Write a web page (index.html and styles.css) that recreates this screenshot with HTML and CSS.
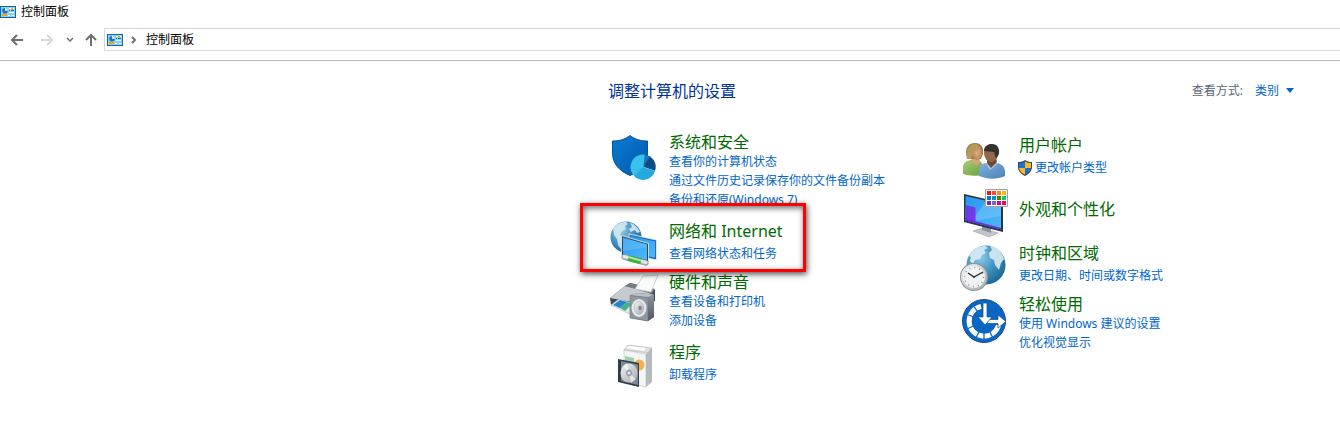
FILE: index.html
```
<!DOCTYPE html>
<html lang="zh-CN">
  <head>
    <meta charset="UTF-8">
    <meta name="viewport" content="width=device-width,initial-scale=1.0">
    <title>控制面板</title>
    <link rel="stylesheet" href="styles.css">
  </head>
  <body>
    <svg class="defs" aria-hidden="true">
      <defs>
        <linearGradient id="gShield" x1="0" y1="0" x2="1" y2="1"><stop offset="0" stop-color="#0a7cd2"/><stop offset="1" stop-color="#0058ad"/></linearGradient>
        <linearGradient id="gScreen" x1="0" y1="0" x2="1" y2="1"><stop offset="0" stop-color="#2796ef"/><stop offset="1" stop-color="#4fb8fb"/></linearGradient>
        <radialGradient id="gGlobe" cx=".35" cy=".3" r=".75"><stop offset="0" stop-color="#8fcbe6"/><stop offset=".5" stop-color="#4496c3"/><stop offset="1" stop-color="#1c6595"/></radialGradient>
        <linearGradient id="gMetal" x1="0" y1="0" x2="1" y2="1"><stop offset="0" stop-color="#f4f5f6"/><stop offset="1" stop-color="#a3a8ad"/></linearGradient>
        <linearGradient id="gSide" x1="0" y1="0" x2="0" y2="1"><stop offset="0" stop-color="#8b959e"/><stop offset="1" stop-color="#4d5862"/></linearGradient>
        <linearGradient id="gGreen" x1="0" y1="0" x2="1" y2="1"><stop offset="0" stop-color="#a9cf75"/><stop offset="1" stop-color="#689d3e"/></linearGradient>
        <linearGradient id="gBlue" x1="0" y1="0" x2="1" y2="1"><stop offset="0" stop-color="#82b0da"/><stop offset="1" stop-color="#4b81b8"/></linearGradient>
        <radialGradient id="gSkin"><stop offset="0" stop-color="#dcae87"/><stop offset="1" stop-color="#bd835c"/></radialGradient>
        <linearGradient id="gPurple" x1="0" y1="0" x2="1" y2="1"><stop offset="0" stop-color="#5548dc"/><stop offset="1" stop-color="#8b2cf5"/></linearGradient>
        <symbol id="panel" viewBox="0 0 16 12">
          <path fill="#17679f" d="M0 0h16v12H0z"/><path fill="#8bd1f8" d="M1 1h14v10H1z"/>
          <circle cx="5" cy="4.8" r="2.8" fill="#1677bd"/><path fill="#fff" d="M5 4.8V2a2.8 2.8 0 0 1 2.8 2.800z"/>
          <path stroke="#fff" d="M9 2.500h5M9 6.500h5"/><path stroke="#1677bd" d="M9 4.500h1M11 4.500h3"/>
          <path fill="#f5a51d" d="M11 2h2v2h-2zM2 8h5v2H2z"/><path fill="#fff" d="M8 9h2v1H8zM12 9h2v1h-2z"/>
        </symbol>
      </defs>
    </svg>

    <header class="window-top">
      <div class="titlebar">
        <svg class="panel-icon" aria-hidden="true"><use href="#panel"/></svg>
        <span>控制面板</span>
      </div>
      <nav class="toolbar" aria-label="导航">
        <button class="nav-btn back" type="button" aria-label="后退"><svg width="14" height="12" viewBox="0 0 14 12"><path d="M13 6H2M7 1 2 6l5 5"/></svg></button>
        <button class="nav-btn forward" type="button" aria-label="前进" disabled><svg width="14" height="12" viewBox="0 0 14 12"><path d="M1 6h11M7 1l5 5-5 5"/></svg></button>
        <button class="nav-btn recent" type="button" aria-label="最近浏览的位置"><svg width="8" height="6" viewBox="0 0 8 6"><path d="M1 1l3 3 3-3"/></svg></button>
        <button class="nav-btn up" type="button" aria-label="上移"><svg width="12" height="14" viewBox="0 0 12 14"><path d="M6 13V2M1 7l5-5 5 5"/></svg></button>
        <div class="address">
          <svg class="panel-icon" aria-hidden="true"><use href="#panel"/></svg>
          <svg class="crumb" width="6" height="8" viewBox="0 0 6 8" aria-hidden="true"><path d="M1 1l3 3-3 3"/></svg>
          <a href="#">控制面板</a>
        </div>
      </nav>
    </header>

    <main class="content">
      <div class="content-head">
        <h1>调整计算机的设置</h1>
        <div class="view-by">
          <label for="view">查看方式:</label>
          <select id="view"><option>类别</option></select>
          <svg width="8" height="5" viewBox="0 0 8 5" aria-hidden="true"><path fill="#0066cc" d="M0 0h8L4 5z"/></svg>
        </div>
      </div>

      <div class="categories">
        <div class="column">
          <section class="category">
            <svg class="icon" viewBox="0 0 48 46" aria-hidden="true">
              <path fill="url(#gShield)" stroke="#075596" d="M21 4.500c5 4 11 5.500 17.500 5.500v12c0 11-7 18-17.500 22.500C10.500 40 3.500 33 3.500 22V10C10 10 16 8.500 21 4.500z"/>
              <circle cx="34" cy="36" r="12.500" fill="#35c3ee"/>
              <path fill="#22a9dd" d="M34 36l12 4a12.500 12.500 0 0 1-21 5z"/>
              <path fill="#0f4d87" d="M34 36l1-12.500A12.500 12.500 0 0 1 46 40z"/>
              <path fill="#1d74b8" d="M35 23.500l6 2-7 10.500z"/>
              <path fill="none" stroke="#5ad6f5" stroke-width=".8" d="M34 36l1-12M34 36l12 4"/>
            </svg>
            <div class="text">
              <h2><a href="#">系统和安全</a></h2>
              <a href="#">查看你的计算机状态</a>
              <a href="#">通过文件历史记录保存你的文件备份副本</a>
              <a href="#">备份和还原(Windows 7)</a>
            </div>
          </section>

          <section class="category short marked">
            <svg class="icon" viewBox="0 0 48 46" aria-hidden="true">
              <circle cx="17" cy="20" r="15.500" fill="url(#gGlobe)"/>
              <path fill="#d5e9f2" opacity=".9" d="M4 12C7 7 12 5 17 5l2 2-3 2 1 3-4 2-2 4 3 2 2 4-3 3-1 5-3-4-1-6-3-4zM21 6c5 1 8 5 10 9l-3 1-2-3-4 2-2-3 3-2z"/>
              <path fill="#226fae" stroke="#eaf5fb" stroke-width=".8" d="M20 17l27.500 6v20L20 37z"/>
              <path fill="url(#gScreen)" d="M21.500 19L46 24.500v16L21.500 36z"/>
              <path fill="#29475d" stroke="#eaf5fb" stroke-width=".8" d="M12.500 18.500l27 8V45l-27-6.500z"/>
              <path fill="url(#gScreen)" d="M14 20.500l24 7v15.500l-24-6z"/>
              <path fill="#7accff" opacity=".4" d="M14 20.500l24 7v3L14 34z"/>
              <path stroke="#a4aaad" stroke-width="5.500" stroke-linecap="round" d="M15 40l22 6"/>
              <path stroke="#e6e9ea" stroke-width="3" stroke-linecap="round" d="M15 39.500l22 6"/>
              <path stroke="#3fae42" stroke-width="5.500" d="M19 41l13 3.500"/><path stroke="#a7e99e" stroke-width="2" d="M19 40l13 3.500"/>
            </svg>
            <div class="text">
              <h2><a href="#">网络和 Internet</a></h2>
              <a href="#">查看网络状态和任务</a>
            </div>
          </section>

          <section class="category">
            <svg class="icon" viewBox="0 0 48 46" aria-hidden="true">
              <path fill="#40474d" d="M1 27l15-12 5-3 25 7v11L27 42 2 34z"/>
              <path fill="#c6cbd0" d="M1 27l15-12 28 5-15 12z"/>
              <path fill="#747d84" d="M16 15l6-3 24 6-3 5z"/>
              <path fill="#fafbfb" stroke="#b9bec3" stroke-width=".7" d="M26 18l8-13 15-1-7 17z"/>
              <path fill="#e3e6e8" stroke="#a8afb4" stroke-width=".5" d="M2 34l8-6 19 6-9 9z"/>
              <path fill="#2585d0" d="M4 34l7-5 7 2-7 6z"/><path fill="#43b28f" d="M11 37l7-6 5 2-7 7z"/>
              <path fill="#5d6871" d="M21 24.500l7-2.500 17 1.500V46l-6 4-18-3z"/>
              <path fill="#b8bfc5" d="M21 24.500l7-2.500 17 1.500-6 3z"/>
              <path fill="url(#gSide)" d="M39 26.500l6-3V46l-6 4z"/>
              <path fill="#8f989f" stroke="#6b757d" stroke-width=".6" d="M21 24.500l18 2V50l-18-3z"/>
              <ellipse cx="30" cy="37" rx="7.500" ry="9" fill="#e7eaec"/>
              <ellipse cx="30" cy="37" rx="5" ry="6.500" fill="url(#gMetal)" stroke="#aeb4b9" stroke-width=".6"/>
              <ellipse cx="31" cy="37" rx="1.700" ry="2.200" fill="#7d868d"/>
            </svg>
            <div class="text">
              <h2><a href="#">硬件和声音</a></h2>
              <a href="#">查看设备和打印机</a>
              <a href="#">添加设备</a>
            </div>
          </section>

          <section class="category short">
            <svg class="icon" viewBox="0 0 48 46" aria-hidden="true">
              <path fill="#dcdedf" stroke="#aeb2b5" stroke-width=".6" d="M15 12l4-5 24 3-3 5z"/>
              <path fill="#f4f5f5" stroke="#b4b8bb" stroke-width=".6" d="M15 12l22 4v33l-22-5z"/>
              <path fill="#b5babd" d="M37 16l6-6v34l-6 5z"/><path fill="#fff" d="M17 10l3-2 17 2-2 3z"/>
              <path fill="#a7cdb7" d="M16 18l9 2v10l-9 2z"/><circle cx="30" cy="27" r="5.500" fill="#f6b14e"/>
              <path fill="#2f3c49" d="M9 21l21 4v24L9 44z"/><path fill="#7d8a96" d="M12 23l17 3.500V47l-17-4z"/>
              <ellipse cx="20" cy="35" rx="8.500" ry="9.500" fill="url(#gMetal)"/>
              <path fill="#fff" opacity=".6" d="M20 35l-6-7 4-3zM20 35l7 6-5 4z"/>
              <ellipse cx="20" cy="35" rx="2.500" ry="3" fill="#aeb6be" stroke="#7d8791" stroke-width=".7"/><circle cx="20" cy="35" r="1" fill="#fff"/>
            </svg>
            <div class="text">
              <h2><a href="#">程序</a></h2>
              <a href="#">卸载程序</a>
            </div>
          </section>
        </div>

        <div class="column">
          <section class="category short">
            <svg class="icon" viewBox="0 0 48 46" aria-hidden="true">
              <path fill="url(#gGreen)" d="M4 43V35c1-4 5-6 9-6l8 1 4 5v9c-8 1-15 1-21-1z"/>
              <path fill="#d1a77e" d="M13 26h7l1 5-3 4-6-5z"/>
              <path fill="#9a7c42" d="M7 22c0-7 4-10 9-10 6 0 9 4 8 11l-2 5h-5l-9 0z"/>
              <ellipse cx="18" cy="22" rx="5" ry="7" fill="url(#gSkin)"/>
              <path fill="#b6995b" d="M8 21c1-6 5-9 10-8l4 4c-4 0-7 2-8 6l-2 5H8z"/>
              <path fill="url(#gBlue)" d="M20 45v-7c1-4 4-6 8-6h10c5 1 8 4 8 9v4c-9 4-18 3-26 0z"/>
              <path fill="#a9c8e6" d="M27 32l4 7 4-3 4-4z"/><path fill="#714a35" d="M28 27h9l1 4-6 6-4-5z"/>
              <ellipse cx="32" cy="22" rx="7" ry="9" fill="#93654a"/>
              <path fill="#343331" d="M25 20c0-5 4-7 8-7 5 0 8 4 7 10l-3 5-2-7c-4 0-7-1-10-1z"/>
            </svg>
            <div class="text">
              <h2><a href="#">用户帐户</a></h2>
              <a class="with-shield" href="#"><svg width="14" height="16" viewBox="0 0 14 16" aria-hidden="true">
                <path fill="#3a4249" d="M7 0c2 1.500 4 2 7 2v5c0 4-3 7-7 9-4-2-7-5-7-9V2c3 0 5-.5 7-2z"/>
                <path fill="#1673cf" d="M7 1.500V8H1V3c2 0 4-.5 6-1.500zM7 8h6c-.5 3-3 5.500-6 6.800z"/>
                <path fill="#fdb827" d="M7 1.500V8h6V3c-2 0-4-.5-6-1.500zM7 8H1c.5 3 3 5.500 6 6.800z"/>
              </svg>更改帐户类型</a>
            </div>
          </section>

          <section class="category single">
            <svg class="icon" viewBox="0 0 48 46" aria-hidden="true">
              <path fill="#c0c6ca" stroke="#8d959a" stroke-width=".5" d="M14 46l9-3 16 5-9 4z"/><path fill="#8c959b" d="M23 38l9 3v7l-9-3z"/>
              <path fill="#26353f" d="M5 9l39 9v29L5 37z"/>
              <path fill="url(#gScreen)" d="M6.500 11L42 19v25.500L6.500 35.500z"/>
              <path fill="#8cd4ff" opacity=".4" d="M27 16l15 3v12L12 37z"/>
              <path fill="url(#gPurple)" d="M6.500 20l10 2.500V38l-10-2.500z"/><path fill="#692be0" d="M6.500 33.500L42 43v1.500l-35.500-9z"/>
              <path fill="#fff" stroke="#a2a2a2" d="M26.500 4.500h22v17h-22z"/>
              <path fill="#e81123" d="M28 6h4v4h-4z"/><path fill="#ff4343" d="M33 6h4v4h-4z"/><path fill="#ff8c00" d="M38 6h4v4h-4z"/><path fill="#ffb900" d="M43 6h4v4h-4z"/>
              <path fill="#0078d7" d="M28 11h4v4h-4z"/><path fill="#0099bc" d="M33 11h4v4h-4z"/><path fill="#498205" d="M38 11h4v4h-4z"/><path fill="#00cc6a" d="M43 11h4v4h-4z"/>
              <path fill="#6b2fc4" d="M28 16h4v4h-4z"/><path fill="#8764b8" d="M33 16h4v4h-4z"/><path fill="#e3008c" d="M38 16h4v4h-4z"/><path fill="#ea005e" d="M43 16h4v4h-4z"/>
            </svg>
            <div class="text">
              <h2><a href="#">外观和个性化</a></h2>
            </div>
          </section>

          <section class="category short">
            <svg class="icon" viewBox="0 0 48 46" aria-hidden="true">
              <circle cx="27" cy="26" r="19.500" fill="url(#gGlobe)"/>
              <path fill="#d8ebf3" opacity=".9" d="M10 17c3-6 9-10 16-10l3 2-4 2 2 3-4 2-2 4-5 1-2 4-3-3 1-4zM31 7c7 1 12 6 14 13l-3 4-2 7-4-5-1-5-4-2-1-5 3-3z"/>
              <circle cx="15" cy="38" r="14" fill="#8f969c"/><circle cx="15" cy="38" r="13" fill="url(#gMetal)"/><circle cx="15" cy="38" r="11" fill="#f0f2f3"/>
              <circle cx="15" cy="38" r="9.500" fill="none" stroke="#858b90" stroke-width="1.500" stroke-dasharray="1 3.974"/>
              <path fill="none" stroke="#252b30" stroke-width="1.400" d="M9 34l6 4 9-5"/><circle cx="15" cy="38" r="1" fill="#252b30"/>
            </svg>
            <div class="text">
              <h2><a href="#">时钟和区域</a></h2>
              <a href="#">更改日期、时间或数字格式</a>
            </div>
          </section>

          <section class="category">
            <svg class="icon" viewBox="0 0 48 46" aria-hidden="true">
              <circle cx="25" cy="28" r="21.500" fill="#0b66c3" stroke="#164b80"/>
              <path fill="none" stroke="#fff" stroke-width="5" d="M22 13.500a15 15 0 1 0 17.500 19"/>
              <path stroke="#0b66c3" stroke-width="1.300" d="M25 28L7 21M25 28L8 36M25 28l-8 17M25 28v19M25 28l9 17M25 28L14 12"/>
              <circle cx="25" cy="28" r="12" fill="#0b66c3"/>
              <path fill="#fff" stroke="#0b4f97" stroke-width=".7" d="M28 26.500h11V22l8 6.500-8 6.500v-4.500H28z"/>
              <path fill="#fff" stroke="#0b4f97" stroke-width=".7" d="M24 10h4v14h5l-7 8-7-8h5z"/>
            </svg>
            <div class="text">
              <h2><a href="#">轻松使用</a></h2>
              <a href="#">使用 Windows 建议的设置</a>
              <a href="#">优化视觉显示</a>
            </div>
          </section>
        </div>
      </div>
    </main>
  </body>
</html>
```
FILE: styles.css
```
:root{--link:#0066cc;--heading:#006a00;--title:#003399;--line:#d9d9d9}
*,*::after{box-sizing:border-box}
body{margin:0;background:#fff;color:#000;font-family:"Noto Sans","Noto Sans CJK SC",sans-serif;font-size:12px;line-height:19px}
a{color:var(--link);text-decoration:none}
a:hover{text-decoration:underline}
h1,h2{margin:0;font-size:16px;font-weight:400}
.defs{position:absolute;width:0;height:0}

.window-top{border-bottom:1px solid #b8b8b8;padding-bottom:9px}
.titlebar{display:flex;align-items:center;gap:5px;height:23px}
.panel-icon{width:16px;height:12px;flex:none}
.toolbar{display:flex;align-items:center;padding-top:5px}
.nav-btn{display:flex;align-items:center;justify-content:center;width:30px;height:23px;padding:0;border:0;background:none}
.nav-btn path,.crumb path{fill:none;stroke:#707070;stroke-width:2}
.back{margin-left:2px}
.forward path{stroke:#d8d8d8}
.recent{width:16px}
.recent path{stroke-width:1.5}
.up{width:26px}
.address{display:flex;flex:1;align-items:center;height:23px;padding-left:2px;border:1px solid var(--line);border-right:0}
.address a{color:#000;margin-left:9px}
.crumb{margin-left:8px}

.content{max-width:732px;margin-left:auto;padding:20px 46px 20px 0}
.content-head{display:flex;justify-content:space-between;align-items:center;height:20px}
h1{color:var(--title);line-height:20px}
.view-by{display:flex;align-items:center;padding-bottom:2px;color:#5a6577}
.view-by select{appearance:none;margin:0 6px 0 12px;padding:0;border:0;background:none;color:var(--link);font:inherit}

.categories{display:grid;grid-template-columns:350px 1fr;margin-top:30px;padding-left:1px}
.column{display:flex;flex-direction:column;gap:8px}
.category{display:flex;gap:12px}
.icon{width:48px;height:46px;flex:none;overflow:visible}
.text{display:flex;flex-direction:column;align-items:flex-start;white-space:nowrap}
h2{line-height:23px;margin-bottom:-2px}
h2 a{color:var(--heading)}
.short .text{padding-top:3px}
.short h2{margin-bottom:1px}
.single .text{justify-content:center}
.with-shield{display:flex;align-items:center;gap:3px;margin-left:-1px}

/* red frame over the network category */
.marked{position:relative}
.marked::after{content:"";position:absolute;left:-29px;top:-14px;width:226px;height:69px;border:3px solid #f00;box-shadow:1px 2px 6px rgba(0,0,0,.7),inset 1px 2px 6px rgba(0,0,0,.6);pointer-events:none}
```
